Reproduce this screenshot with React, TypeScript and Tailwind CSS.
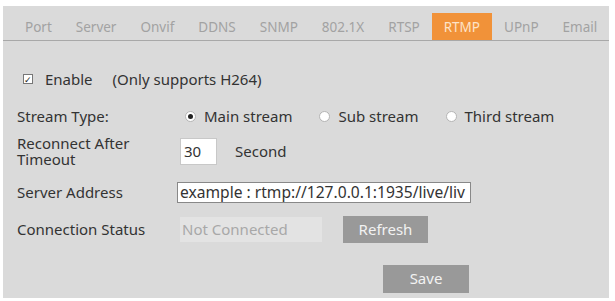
import React from 'react';

// RTMP settings page — tab strip + form rows.
const TABS = ['Port', 'Server', 'Onvif', 'DDNS', 'SNMP', '802.1X', 'RTSP', 'RTMP', 'UPnP', 'Email'];

function Radio({ checked, label }: { checked?: boolean; label: string }) {
  return (
    <label className="flex items-center gap-[8px]">
      <span className="flex h-[11px] w-[11px] items-center justify-center rounded-full border border-[#b5b5b5] bg-white">
        {checked && <span className="h-[5px] w-[5px] rounded-full bg-[#222]" />}
      </span>
      <span>{label}</span>
    </label>
  );
}

export default function App() {
  return (
    <div className="h-[301px] w-[615px] bg-white pl-[3px] pt-[6px]" style={{ fontFamily: '"Noto Sans", "Open Sans", sans-serif' }}>
      <div className="h-[292px] w-[607px] border-r border-white bg-[#dadada] text-[15px] text-[#333]">
        {/* ── Tabs ─────────────────────────────────── */}
        <div className="flex h-[35px] items-end border-b border-[#a8a8a8] pl-[10px]">
          {TABS.map((t) => (
            <div
              key={t}
              className={
                t === 'RTMP'
                  ? 'flex h-[27px] items-center bg-[#f19239] px-[12px] pt-[2px] text-[13.5px] text-[#fde3c8]'
                  : 'flex h-[27px] items-center px-[12px] pt-[2px] text-[13.5px] text-[#a2a2a2]'
              }
            >
              {t}
            </div>
          ))}
        </div>

        {/* ── Form ─────────────────────────────────── */}
        <div className="pl-[14px]">
          <div className="mt-[30px] flex h-[16px] items-center pl-[6px]">
            <span className="flex h-[10px] w-[10px] items-center justify-center border border-[#777] bg-white text-[9px] leading-none text-[#222]">
              ✓
            </span>
            <span className="ml-[12px]">Enable</span>
            <span className="ml-[20px]">(Only supports H264)</span>
          </div>

          <div className="mt-[20px] flex h-[18px] items-center">
            <span className="w-[168px]">Stream Type:</span>
            <div className="flex items-center gap-[27px]">
              <Radio checked label="Main stream" />
              <Radio label="Sub stream" />
              <Radio label="Third stream" />
            </div>
          </div>

          <div className="mt-[10px] flex items-center">
            <div className="flex w-[163px] flex-col leading-[16px]">
              <span>Reconnect After</span>
              <span>Timeout</span>
            </div>
            <div className="flex h-[27px] w-[37px] items-center border border-[#c8c8c8] bg-white pl-[3px]">30</div>
            <span className="ml-[18px]">Second</span>
          </div>

          <div className="mt-[14px] flex items-center">
            <span className="w-[160px]">Server Address</span>
            <div className="flex h-[21px] w-[294px] items-center whitespace-nowrap border border-[#888] bg-white pl-[2px] text-[15.6px]">
              example : rtmp://127.0.0.1:1935/live/liv
            </div>
          </div>

          <div className="mt-[12px] flex items-center">
            <span className="w-[163px]">Connection Status</span>
            <div className="flex h-[25px] w-[142px] items-center bg-[#e3e3e3] pl-[2px] text-[#a8a8a8]">Not Connected</div>
            <button className="ml-[21px] h-[27px] w-[85px] bg-[#999] text-[#f2f2f2]">Refresh</button>
          </div>

          <div className="mt-[22px] flex">
            <button className="ml-[366px] h-[28px] w-[86px] bg-[#999] text-[#f2f2f2]">Save</button>
          </div>
        </div>
      </div>
    </div>
  );
}
